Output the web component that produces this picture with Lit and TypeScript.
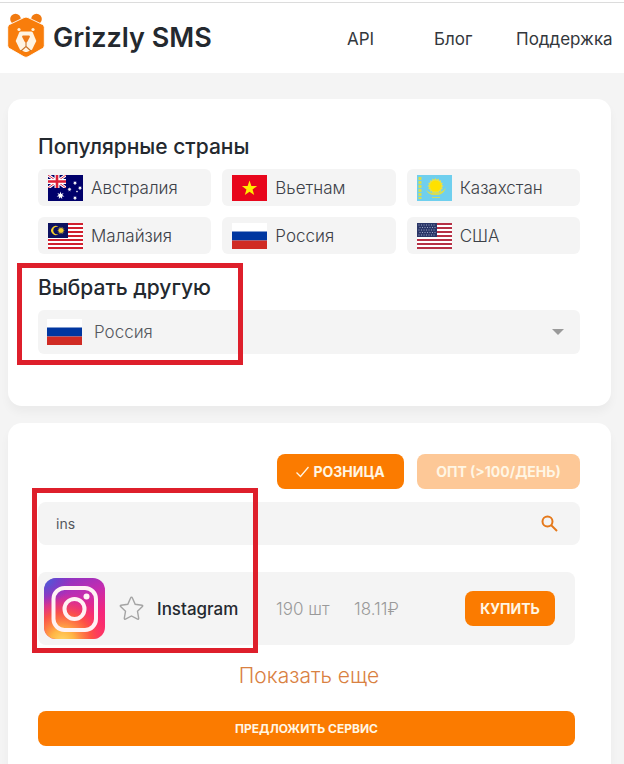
import { LitElement, html, svg, css } from "lit";
import { customElement, property, state } from "lit/decorators.js";

const starPoints = (cx: number, cy: number, r: number, tips = 5, inner = 0.4) =>
  Array.from({ length: tips * 2 }, (_, i) => {
    const a = (Math.PI * i) / tips - Math.PI / 2;
    const k = i % 2 ? r * inner : r;
    return `${(cx + k * Math.cos(a)).toFixed(2)},${(cy + k * Math.sin(a)).toFixed(2)}`;
  }).join(" ");

const stripes = (count: number, color: string) =>
  Array.from({ length: count }, (_, i) =>
    i % 2 === 0
      ? svg`<rect x="0" y=${(i * 26) / count} width="35" height=${26 / count} fill=${color} />`
      : null
  );

const flags: Record<string, unknown> = {
  au: svg`
    <rect width="35" height="26" fill="#00006b" />
    <path d="M0 0L18 13M18 0L0 13" stroke="#fff" stroke-width="3" />
    <path d="M0 0L18 13M18 0L0 13" stroke="#e0304a" stroke-width="1" />
    <path d="M9 0V13M0 6.500H18" stroke="#fff" stroke-width="5" />
    <path d="M9 0V13M0 6.500H18" stroke="#dd2038" stroke-width="2.600" />
    <path d="M18 0H35V26H0V13H18Z" fill="#00006b" />
    <polygon points=${starPoints(12.5, 20.5, 4, 7, 0.45)} fill="#fff" />
    <polygon points=${starPoints(27, 8, 2.2, 7, 0.45)} fill="#fff" />
    <polygon points=${starPoints(21.5, 14.5, 2.2, 7, 0.45)} fill="#fff" />
    <polygon points=${starPoints(32, 13, 2.2, 7, 0.45)} fill="#fff" />
    <polygon points=${starPoints(27, 23, 2.2, 7, 0.45)} fill="#fff" />
    <polygon points=${starPoints(29, 16.5, 1.2)} fill="#fff" />`,
  vn: svg`
    <rect width="35" height="26" fill="#e8061c" />
    <polygon points=${starPoints(17.5, 13.5, 8)} fill="#ffec00" />`,
  kz: svg`
    <rect width="35" height="26" fill="#6fcfee" />
    <path d="M3 2v22" stroke="#d8dc50" stroke-width="3" stroke-dasharray="3 1" />
    <polygon points=${starPoints(18.5, 11, 8, 16, 0.8)} fill="#e6e04a" />
    <circle cx="18.500" cy="11" r="5.500" fill="#ffe100" />
    <path d="M9 14C11 20 15 20 18.500 20S27 20 29 12C27 16 22 18 18.500 18S11 18 9 14Z" fill="#d6dd55" />
    <path d="M15 22.500h8" stroke="#c9dd6a" />`,
  my: svg`
    <rect width="35" height="26" fill="#fff" />
    ${stripes(13, "#d0202e")}
    <rect width="20" height="15" fill="#0c1160" />
    <path d="M10.500 4A4.500 4.500 0 1 0 10.500 11A3.800 3.800 0 1 1 10.500 4Z" fill="#f5cf2d" />
    <polygon points=${starPoints(13, 7.5, 4, 12, 0.5)} fill="#f5cf2d" />`,
  ru: svg`
    <rect width="35" height="26" fill="#fff" />
    <rect y="8.500" width="35" height="9" fill="#0036a0" />
    <rect y="17.500" width="35" height="8.500" fill="#d02b24" />`,
  us: svg`
    <rect width="35" height="26" fill="#fff" />
    ${stripes(13, "#b53045")}
    <rect width="20" height="14" fill="#2b3768" />
    ${[2, 4.5, 7, 9.5, 12].map(
      (y, i) => svg`<path d="M${i % 2 ? 2.5 : 1.5} ${y}H19" stroke="#aab3cf" stroke-width="0.900" stroke-dasharray="1 1.500" />`
    )}`,
};

@customElement("country-flag")
class CountryFlag extends LitElement {
  @property() code = "ru";

  static styles = css`
    :host {
      display: block;
      flex: none;
      width: 35px;
      height: 26px;
    }
    .flag {
      display: block;
      width: 100%;
      height: 100%;
    }
  `;

  render() {
    return html`<svg class="flag" viewBox="0 0 35 26" aria-hidden="true">${flags[this.code]}</svg>`;
  }
}

@customElement("app-root")
class AppRoot extends LitElement {
  @state() query = "ins";

  countries = [
    ["au", "Австралия"],
    ["vn", "Вьетнам"],
    ["kz", "Казахстан"],
    ["my", "Малайзия"],
    ["ru", "Россия"],
    ["us", "США"],
  ];

  static styles = css`
    :host {
      display: block;
      min-height: 100vh;
      background: #f4f4f4;
      color: #24292f;
      font-family: Inter, "Noto Sans", sans-serif;
      font-size: 17px;
      line-height: 24px;
    }
    * {
      box-sizing: border-box;
    }
    button,
    input,
    select {
      font: inherit;
      color: inherit;
      border: 0;
      margin: 0;
      padding: 0;
      background: none;
    }
    button {
      cursor: pointer;
    }
    a {
      color: inherit;
      text-decoration: none;
    }
    .rule {
      height: 3px;
      background: #fff;
      border-bottom: 1px solid #dcdcdc;
    }
    .header {
      display: flex;
      align-items: center;
      justify-content: space-between;
      height: 70px;
      padding: 0 11px 0 7px;
      background: #fff;
    }
    .brand {
      display: flex;
      align-items: center;
      gap: 8px;
      font-size: 27px;
      font-weight: 600;
    }
    .bear {
      width: 38px;
      height: 50px;
    }
    .nav {
      display: grid;
      grid-template-columns: 87px 82px 97px;
      padding-top: 2px;
      color: #33373c;
    }
    .page {
      display: grid;
      gap: 17px;
      padding: 26px 13px 0 8px;
    }
    .card {
      background: #fff;
      border-radius: 14px;
      box-shadow: 0 6px 10px rgba(0, 0, 0, 0.04);
    }
    .choose {
      padding: 36px 31px 52px 30px;
    }
    .title {
      margin: 0 0 10px;
      font-size: 21px;
      font-weight: 500;
      line-height: 24px;
    }
    .countries {
      display: grid;
      grid-template-columns: repeat(3, 1fr);
      gap: 11px;
      margin-bottom: 22px;
    }
    .country {
      display: flex;
      align-items: center;
      gap: 8px;
      height: 37px;
      padding: 0 10px;
      border-radius: 6px;
      background: #f4f4f4;
      color: #3c4148;
      font-weight: 300;
    }
    .marked {
      position: relative;
    }
    .mark {
      position: absolute;
      border: 5px solid #de1f2b;
      pointer-events: none;
    }
    .mark-country {
      top: -13px;
      left: -21px;
      width: 226px;
      height: 102px;
    }
    .mark-search {
      top: -14px;
      left: -6px;
      width: 226px;
      height: 165px;
    }
    .picker {
      display: flex;
      align-items: center;
      gap: 12px;
      height: 44px;
      padding: 0 16px 0 9px;
      border-radius: 6px;
      background: #f4f4f4;
    }
    .select {
      flex: 1;
      height: 100%;
      appearance: none;
      color: #54585e;
      font-weight: 300;
    }
    .arrow {
      width: 12px;
      height: 6px;
      fill: #9a9a9a;
    }
    .services {
      padding: 31px 31px 18px 30px;
      border-radius: 14px 14px 0 0;
    }
    .modes {
      display: flex;
      justify-content: flex-end;
      gap: 13px;
      margin-bottom: 13px;
    }
    .solid {
      display: flex;
      align-items: center;
      justify-content: center;
      gap: 4px;
      height: 35px;
      border-radius: 8px;
      background: #fb7b00;
      color: #fff6e4;
      font-size: 14px;
      font-weight: 700;
    }
    .retail {
      width: 127px;
    }
    .bulk {
      width: 163px;
      background: #fdc897;
    }
    .check {
      width: 13px;
      height: 12px;
      fill: none;
      stroke: #fff6e4;
    }
    .search {
      display: flex;
      align-items: center;
      height: 43px;
      margin-bottom: 27px;
      padding: 0 22px 0 18px;
      border-radius: 8px;
      background: #f4f4f4;
    }
    .query {
      flex: 1;
      min-width: 0;
      color: #54585e;
      font-size: 14px;
      outline: 0;
    }
    .lens {
      display: block;
      width: 17px;
      height: 17px;
      fill: none;
      stroke: #e5791b;
      stroke-width: 2;
    }
    .service {
      display: flex;
      align-items: center;
      height: 73px;
      margin: 0 5px 17px 0;
      padding: 0 20px 0 6px;
      border-radius: 8px;
      background: #f4f4f4;
    }
    .insta {
      width: 61px;
      height: 61px;
      margin-right: 14px;
    }
    .star {
      display: block;
      width: 25px;
      height: 25px;
      margin-right: 13px;
      fill: none;
      stroke: #a4a4a4;
      stroke-width: 1.4;
    }
    .name {
      width: 119px;
      font-weight: 500;
    }
    .count,
    .price {
      color: #9a9a9a;
      font-weight: 300;
    }
    .count {
      width: 78px;
    }
    .buy {
      width: 90px;
      margin-left: auto;
    }
    .more {
      display: block;
      margin: 0 auto 21px;
      color: #d98142;
      font-size: 21px;
      font-weight: 300;
      line-height: 28px;
    }
    .suggest {
      width: calc(100% - 5px);
      font-size: 12px;
    }
  `;

  render() {
    return html`
      <div class="rule"></div>
      <header class="header">
        <a class="brand" href="#">
          <svg class="bear" viewBox="0 0 38 50" aria-hidden="true">
            <circle cx="8.500" cy="6" r="5.300" fill="#f17a10" />
            <circle cx="29.500" cy="6" r="5.300" fill="#f17a10" />
            <path d="M17 4.600Q19 3.600 21 4.600L35.500 11.500Q37.300 12.500 37.300 14.500V32.500Q37.300 34.500 35.500 35.500L21 43.800Q19 44.900 17 43.800L2.500 35.500Q.7 34.500 .7 32.500V14.500Q.7 12.500 2.500 11.500Z" fill="#f87d0b" stroke="#fff" stroke-width=".9" />
            <path d="M14 18.500H24Q25.300 18.500 25.800 19.600L29.300 28L25 36.800L20.500 38.800Q19 39.400 17.500 38.800L13 36.800L8.700 28L12.200 19.600Q12.700 18.500 14 18.500Z" fill="#fff4e3" />
            <path d="M16 22.500H22Q23.300 22.500 22.800 24L20.500 28.500Q19 30.500 17.500 28.500L15.200 24Q14.700 22.500 16 22.500Z" fill="#ee7a18" />
            <path d="M19 29V33.500L14 38M19 33.500L24 38" fill="none" stroke="#c8742a" stroke-width="1.100" />
            <circle cx="12" cy="16.500" r="1.600" fill="#fff0d8" />
            <circle cx="26" cy="16.500" r="1.600" fill="#fff0d8" />
          </svg>
          <span>Grizzly SMS</span>
        </a>
        <nav class="nav">
          <a href="#api">API</a>
          <a href="#blog">Блог</a>
          <a href="#support">Поддержка</a>
        </nav>
      </header>

      <main class="page">
        <section class="card choose">
          <h2 class="title">Популярные страны</h2>
          <div class="countries">
            ${this.countries.map(
              ([code, name]) => html`
                <button class="country"><country-flag code=${code}></country-flag>${name}</button>
              `
            )}
          </div>
          <div class="marked">
            <h2 class="title" id="other">Выбрать другую</h2>
            <div class="picker">
              <country-flag code="ru"></country-flag>
              <select class="select" aria-labelledby="other">
                <option>Россия</option>
              </select>
              <svg class="arrow" viewBox="0 0 12 6" aria-hidden="true"><path d="M0 0H12L6 6Z" /></svg>
            </div>
            <div class="mark mark-country"></div>
          </div>
        </section>

        <section class="card services">
          <div class="modes">
            <button class="solid retail">
              <svg class="check" viewBox="0 0 13 12" aria-hidden="true"><path d="M.5 6.500L4.500 10.500L12.500 1" stroke-width="1.300" /></svg>
              РОЗНИЦА
            </button>
            <button class="solid bulk">ОПТ (&gt;100/ДЕНЬ)</button>
          </div>
          <div class="marked">
            <div class="search">
              <input
                class="query"
                type="text"
                aria-label="Поиск сервиса"
                .value=${this.query}
                @input=${(e: Event) => (this.query = (e.target as HTMLInputElement).value)}
              />
              <button aria-label="Найти">
                <svg class="lens" viewBox="0 0 17 17" aria-hidden="true">
                  <circle cx="6.500" cy="6.500" r="5" />
                  <path d="M10 10L16 16" />
                </svg>
              </button>
            </div>
            <div class="service">
              <svg class="insta" viewBox="0 0 61 61" role="img" aria-label="Instagram">
                <defs>
                  <linearGradient id="base" x1="0.300" y1="0" x2="0.700" y2="1">
                    <stop offset="0" stop-color="#8a35c4" />
                    <stop offset="0.350" stop-color="#c42cb0" />
                    <stop offset="0.700" stop-color="#f5267c" />
                    <stop offset="1" stop-color="#fb2f6c" />
                  </linearGradient>
                  <radialGradient id="warm" cx="0.300" cy="1.050" r="0.800">
                    <stop offset="0" stop-color="#ffd96a" />
                    <stop offset="0.250" stop-color="#ffb545" />
                    <stop offset="0.600" stop-color="#ff5a3c" stop-opacity="0.850" />
                    <stop offset="1" stop-color="#ff2a6a" stop-opacity="0" />
                  </radialGradient>
                  <radialGradient id="cool" cx="0" cy="0" r="0.450">
                    <stop offset="0" stop-color="#3f68dc" />
                    <stop offset="1" stop-color="#6a3ccf" stop-opacity="0" />
                  </radialGradient>
                </defs>
                <rect width="61" height="61" rx="12" fill="url(#base)" />
                <rect width="61" height="61" rx="12" fill="url(#warm)" />
                <rect width="61" height="61" rx="12" fill="url(#cool)" />
                <g fill="none" stroke="#fff2f4" stroke-width="4">
                  <rect x="9.500" y="10" width="42.500" height="42" rx="11" />
                  <circle cx="30.500" cy="31" r="10" />
                </g>
                <circle cx="42.500" cy="18.500" r="3" fill="#fff2f4" />
              </svg>
              <button aria-label="В избранное">
                <svg class="star" viewBox="0 0 25 25" aria-hidden="true">
                  <path d="M12.500 1.300Q13.100 1.300 13.400 2L16.200 8.300L23 9.200Q24.300 9.600 23.400 10.600L18.500 15.300L19.700 22.300Q19.700 23.600 18.500 23.200L12.500 20L6.500 23.200Q5.300 23.600 5.300 22.300L6.500 15.300L1.600 10.600Q.7 9.600 2 9.200L8.800 8.300L11.600 2Q11.900 1.300 12.500 1.300Z" />
                </svg>
              </button>
              <span class="name">Instagram</span>
              <span class="count">190 шт</span>
              <span class="price">18.11₽</span>
              <button class="solid buy">КУПИТЬ</button>
            </div>
            <div class="mark mark-search"></div>
          </div>
          <button class="more">Показать еще</button>
          <button class="solid suggest">ПРЕДЛОЖИТЬ СЕРВИС</button>
        </section>
      </main>
    `;
  }
}
